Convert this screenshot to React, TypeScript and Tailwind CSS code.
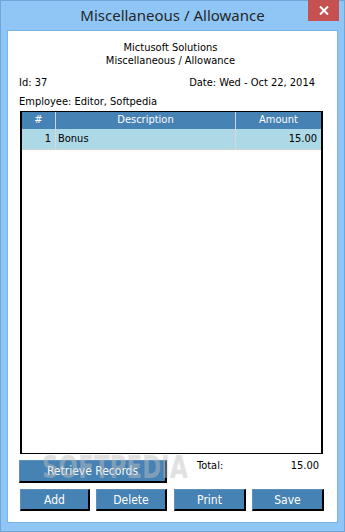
const btn =
  "flex items-center justify-center bg-[#4682b4] text-white border-t border-l border-[#5b90bd] border-r-2 border-b-2 border-r-black border-b-black";

export default function App() {
  return (
    <div className="relative flex h-[532px] w-[345px] flex-col border border-[#6ea6d9] bg-[#8fc6f6] font-['DejaVu_Sans_Condensed','DejaVu_Sans',sans-serif] text-[11px] text-black">
      {/* title bar */}
      <div className="relative h-[29px] shrink-0">
        <div className="pt-[4px] text-center font-['Noto_Sans',sans-serif] text-[15px] leading-[20px] text-[#262626]">
          Miscellaneous / Allowance
        </div>
        <div className="absolute right-[5px] top-[-1px] flex h-[21px] w-[31px] items-center justify-center bg-[#c75050]">
          <svg width="10" height="9" viewBox="0 0 10 9">
            <path d="M1 0.5 L9 8.5 M9 0.5 L1 8.5" stroke="white" strokeWidth="2" />
          </svg>
        </div>
      </div>

      {/* client area */}
      <div className="mx-[6px] mb-[8px] flex flex-1 flex-col border border-[#7cb3e6] bg-white pl-[11px]">
        <div className="mt-[10px] h-[13px] w-[303px] text-center leading-[13px]">Mictusoft Solutions</div>
        <div className="h-[13px] w-[303px] text-center leading-[13px]">Miscellaneous / Allowance</div>

        <div className="mt-[9px] flex h-[13px] w-[303px] leading-[13px]">
          <span>Id: 37</span>
          <span className="ml-auto mr-[7px]">Date: Wed - Oct 22, 2014</span>
        </div>
        <div className="mt-[6px] h-[13px] leading-[13px]">Employee: Editor, Softpedia</div>

        {/* grid */}
        <div className="ml-px mt-[3px] flex h-[343px] w-[303px] flex-col border-x-2 border-y border-black">
          <div className="flex h-[17px] bg-[#4682b4] text-white">
            <div className="w-[34px] border-r border-[#c8d4de] text-center leading-[16px]">#</div>
            <div className="w-[180px] border-r border-[#c8d4de] text-center leading-[16px]">Description</div>
            <div className="flex-1 text-center leading-[16px]">Amount</div>
          </div>
          <div className="flex h-[21px] border-b border-[#d0d0d0] bg-[#add8e6]">
            <div className="w-[34px] border-r border-[#d8d8d8] pr-[4px] text-right leading-[20px]">1</div>
            <div className="w-[180px] border-r border-[#d8d8d8] pl-[2px] leading-[20px]">Bonus</div>
            <div className="flex-1 pr-[4px] text-right leading-[20px]">15.00</div>
          </div>
          <div className="flex-1" />
        </div>

        <div className="mt-[6px] flex h-[23px] w-[303px]">
          <div className={`${btn} w-[148px] text-[12px]`}>Retrieve Records</div>
          <span className="ml-[30px] leading-[12px]">Total:</span>
          <span className="ml-auto mr-[3px] leading-[12px]">15.00</span>
        </div>

        <div className="mt-[6px] flex h-[22px] text-[12px]">
          <div className={`${btn} ml-px w-[70px]`}>Add</div>
          <div className={`${btn} ml-[6px] w-[71px]`}>Delete</div>
          <div className={`${btn} ml-[7px] w-[72px]`}>Print</div>
          <div className={`${btn} ml-[6px] w-[72px]`}>Save</div>
        </div>
      </div>

      {/* watermark */}
      <div className="pointer-events-none absolute left-[41px] top-[449px] origin-left scale-x-[0.8] font-['DejaVu_Sans_Condensed','DejaVu_Sans',sans-serif] text-[32px] font-bold leading-[34px] text-white/25 [text-shadow:0_0_1px_rgba(120,120,120,0.3)]">
        SOFTPEDIA
      </div>
    </div>
  );
}
